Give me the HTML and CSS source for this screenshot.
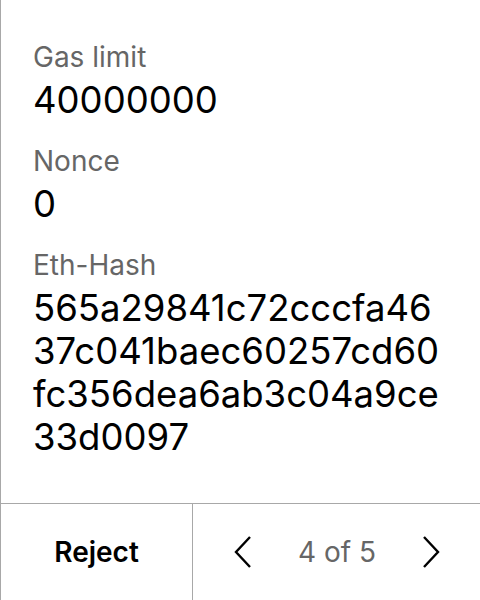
FILE: index.html
```html
<!DOCTYPE html>
<html>
<head>
<meta charset="utf-8">
<link rel="stylesheet" href="styles.css">
</head>
<body>
<div class="screen">
  <div class="details">
    <div class="field">
      <div class="label">Gas limit</div>
      <div class="value">40000000</div>
    </div>
    <div class="field">
      <div class="label">Nonce</div>
      <div class="value">0</div>
    </div>
    <div class="field">
      <div class="label">Eth-Hash</div>
      <div class="value hash">565a29841c72cccfa4637c041baec60257cd60fc356dea6ab3c04a9ce33d0097</div>
    </div>
  </div>
  <div class="footer">
    <div class="reject">Reject</div>
    <div class="pager">
      <svg class="chev" width="18" height="32" viewBox="0 0 18 32"><path d="M16 1 L2 16 L16 31" fill="none" stroke="#000" stroke-width="2.4"/></svg>
      <span class="count">4 of 5</span>
      <svg class="chev" width="18" height="32" viewBox="0 0 18 32"><path d="M2 1 L16 16 L2 31" fill="none" stroke="#000" stroke-width="2.4"/></svg>
    </div>
  </div>
</div>
</body>
</html>
```
FILE: styles.css
```css
html, body {
  margin: 0;
  padding: 0;
  background: #fff;
}
body {
  font-family: Inter, "Noto Sans", sans-serif;
  color: #000;
}
.screen {
  width: 480px;
  height: 600px;
  box-sizing: border-box;
  border-left: 1px solid #a8a8a8;
  display: flex;
  flex-direction: column;
}
.details {
  flex: 1;
  padding: 39px 40px 0 32px;
  display: flex;
  flex-direction: column;
  gap: 21px;
}
.field {
  display: flex;
  flex-direction: column;
  gap: 4px;
}
.label {
  font-size: 28px;
  line-height: 36px;
  color: #666;
}
.value {
  font-size: 36.5px;
  line-height: 43px;
  color: #000;
}
.hash {
  word-break: break-all;
}
.footer {
  height: 96px;
  border-top: 1px solid #a8a8a8;
  display: flex;
}
.reject {
  width: 191px;
  border-right: 1px solid #a8a8a8;
  display: flex;
  align-items: center;
  justify-content: center;
  font-size: 28px;
  font-weight: 600;
}
.pager {
  flex: 1;
  display: flex;
  align-items: center;
  justify-content: space-between;
  padding: 0 40px 0 41px;
}
.count {
  font-size: 28px;
  color: #666;
}
```
